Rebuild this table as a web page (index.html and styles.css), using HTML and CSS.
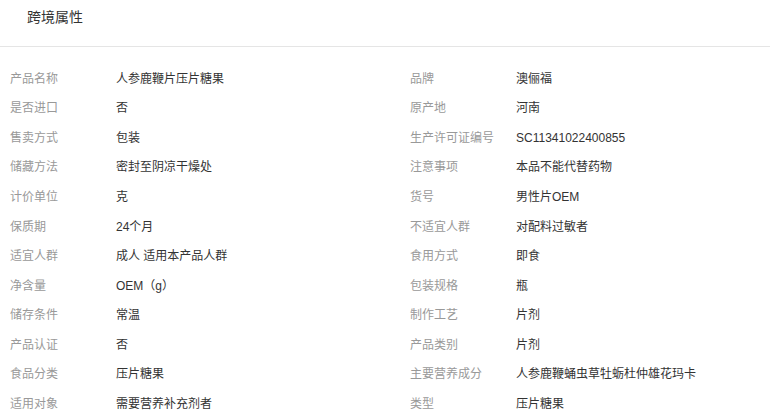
FILE: index.html
```html
<!DOCTYPE html>
<html>
<head>
  <meta charset="utf-8">
  <title>跨境属性</title>
  <link rel="stylesheet" href="styles.css">
</head>
<body>
  <div class="panel">
    <div class="panel-head">
      <span class="panel-title">跨境属性</span>
    </div>
    <ul class="attrs">
      <li class="attr"><span class="attr-name">产品名称</span><span class="attr-value">人参鹿鞭片压片糖果</span></li>
      <li class="attr"><span class="attr-name">品牌</span><span class="attr-value">澳俪福</span></li>
      <li class="attr"><span class="attr-name">是否进口</span><span class="attr-value">否</span></li>
      <li class="attr"><span class="attr-name">原产地</span><span class="attr-value">河南</span></li>
      <li class="attr"><span class="attr-name">售卖方式</span><span class="attr-value">包装</span></li>
      <li class="attr"><span class="attr-name">生产许可证编号</span><span class="attr-value">SC11341022400855</span></li>
      <li class="attr"><span class="attr-name">储藏方法</span><span class="attr-value">密封至阴凉干燥处</span></li>
      <li class="attr"><span class="attr-name">注意事项</span><span class="attr-value">本品不能代替药物</span></li>
      <li class="attr"><span class="attr-name">计价单位</span><span class="attr-value">克</span></li>
      <li class="attr"><span class="attr-name">货号</span><span class="attr-value">男性片OEM</span></li>
      <li class="attr"><span class="attr-name">保质期</span><span class="attr-value">24个月</span></li>
      <li class="attr"><span class="attr-name">不适宜人群</span><span class="attr-value">对配料过敏者</span></li>
      <li class="attr"><span class="attr-name">适宜人群</span><span class="attr-value">成人 适用本产品人群</span></li>
      <li class="attr"><span class="attr-name">食用方式</span><span class="attr-value">即食</span></li>
      <li class="attr"><span class="attr-name">净含量</span><span class="attr-value">OEM（g）</span></li>
      <li class="attr"><span class="attr-name">包装规格</span><span class="attr-value">瓶</span></li>
      <li class="attr"><span class="attr-name">储存条件</span><span class="attr-value">常温</span></li>
      <li class="attr"><span class="attr-name">制作工艺</span><span class="attr-value">片剂</span></li>
      <li class="attr"><span class="attr-name">产品认证</span><span class="attr-value">否</span></li>
      <li class="attr"><span class="attr-name">产品类别</span><span class="attr-value">片剂</span></li>
      <li class="attr"><span class="attr-name">食品分类</span><span class="attr-value">压片糖果</span></li>
      <li class="attr"><span class="attr-name">主要营养成分</span><span class="attr-value">人参鹿鞭蛹虫草牡蛎杜仲雄花玛卡</span></li>
      <li class="attr"><span class="attr-name">适用对象</span><span class="attr-value">需要营养补充剂者</span></li>
      <li class="attr"><span class="attr-name">类型</span><span class="attr-value">压片糖果</span></li>
    </ul>
  </div>
</body>
</html>
```

FILE: styles.css
```css
body {
  margin: 0;
  background: #fff;
  font-family: "Liberation Sans", Arial, "Noto Sans CJK SC", sans-serif;
  color: #333;
  overflow: hidden;
}

.panel-head {
  height: 46px;
  padding-left: 27px;
  border-bottom: 1px solid #e5e5e5;
}

.panel-title {
  display: block;
  font-size: 14px;
  line-height: 34px;
  color: #333;
}

.attrs {
  list-style: none;
  margin: 0;
  padding: 17px 0 0 10px;
  display: grid;
  grid-template-columns: 400px auto;
  grid-auto-rows: 29.55px;
}

.attr {
  display: flex;
  align-items: center;
  font-size: 12px;
  line-height: 16px;
  white-space: nowrap;
}

.attr-name {
  width: 106px;
  flex-shrink: 0;
  color: #999;
}

.attr-value {
  color: #333;
}
```
